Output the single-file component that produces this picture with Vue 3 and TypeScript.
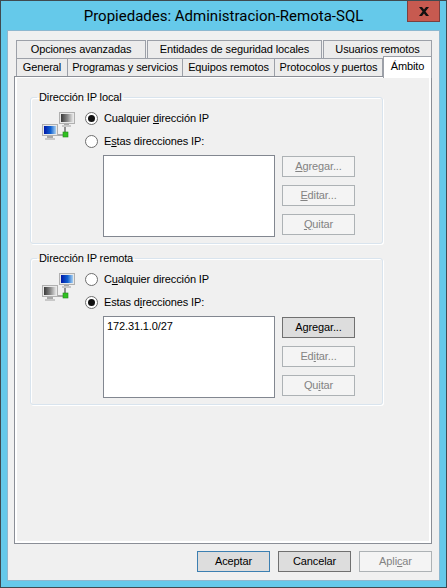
<script setup lang="ts">
interface Btn { pre: string; key: string; post: string; on?: boolean }
interface Group {
  title: string; active: boolean; firstKey: [string, string, string]; secondKey: [string, string, string];
  items: string[]; btns: Btn[]; remote: boolean;
}
const row1 = [
  { t: 'Opciones avanzadas', c: 't-a' },
  { t: 'Entidades de seguridad locales', c: 't-b' },
  { t: 'Usuarios remotos', c: 't-c' },
];
const row2 = [
  { t: 'General', c: 't-d' },
  { t: 'Programas y servicios', c: 't-e' },
  { t: 'Equipos remotos', c: 't-f' },
  { t: 'Protocolos y puertos', c: 't-g' },
];
const groups: Group[] = [
  {
    title: 'Dirección IP local', active: false, remote: false,
    firstKey: ['Cualquier ', 'd', 'irección IP'], secondKey: ['E', 's', 'tas direcciones IP:'],
    items: [],
    btns: [
      { pre: '', key: 'A', post: 'gregar...' },
      { pre: '', key: 'E', post: 'ditar...' },
      { pre: '', key: 'Q', post: 'uitar' },
    ],
  },
  {
    title: 'Dirección IP remota', active: true, remote: true,
    firstKey: ['C', 'u', 'alquier dirección IP'], secondKey: ['Estas d', 'i', 'recciones IP:'],
    items: ['172.31.1.0/27'],
    btns: [
      { pre: 'Agregar...', key: '', post: '', on: true },
      { pre: 'Ed', key: 'i', post: 'tar...' },
      { pre: 'Qu', key: 'i', post: 'tar' },
    ],
  },
];
</script>

<template>
  <div class="window">
    <header class="titlebar">
      <span class="title">Propiedades: Administracion-Remota-SQL</span>
      <div class="close">
        <svg width="14" height="11" viewBox="0 0 14 11"><path d="M2 1h3l2 2.500L9 1h3L8.500 5.500 12 10H9L7 7.500 5 10H2l3.500-4.500z" fill="#111" /></svg>
      </div>
    </header>
    <main class="client">
      <div class="tabrow first">
        <div v-for="tab in row1" :key="tab.t" class="tab" :class="tab.c">{{ tab.t }}</div>
      </div>
      <div class="tabrow second">
        <div v-for="tab in row2" :key="tab.t" class="tab" :class="tab.c">{{ tab.t }}</div>
        <div class="tab active">Ámbito</div>
      </div>
      <section class="page">
        <div class="page-inner">
          <fieldset v-for="g in groups" :key="g.title" class="group">
            <legend>{{ g.title }}</legend>
            <div class="group-body">
              <svg class="net" width="34" height="30" viewBox="0 0 34 30">
                <defs>
                  <linearGradient id="gray" x1="0" x2="1" y1="0" y2="0">
                    <stop offset="0" stop-color="#3a3a3a" /><stop offset="0.55" stop-color="#8c8c8c" /><stop offset="1" stop-color="#e4e4e4" />
                  </linearGradient>
                  <linearGradient id="blue" x1="0" x2="1" y1="0" y2="0">
                    <stop offset="0" stop-color="#0018a8" /><stop offset="0.55" stop-color="#1060d0" /><stop offset="1" stop-color="#a8d0f0" />
                  </linearGradient>
                </defs>
                <rect x="22" y="12" width="5" height="2" fill="#a8a8a8" />
                <rect x="20" y="14" width="9" height="2" fill="#c8c8c8" />
                <rect x="22" y="16" width="2" height="6" fill="#8e8e8e" />
                <rect x="15" y="23" width="6" height="2" fill="#a8a8a8" />
                <rect x="17.500" y="1.500" width="15" height="11" fill="#e8e8e8" stroke="#b0b0b0" />
                <rect x="19" y="3" width="12" height="8" :fill="g.remote ? 'url(#blue)' : 'url(#gray)'" />
                <rect x="21" y="21" width="5" height="5" fill="#30c020" stroke="#208a18" stroke-width="0.600" />
                <rect x="0.500" y="13.500" width="15" height="11" fill="#e8e8e8" stroke="#b0b0b0" />
                <rect x="2" y="15" width="12" height="8" :fill="g.remote ? 'url(#gray)' : 'url(#blue)'" />
                <rect x="5" y="25" width="6" height="2" fill="#a8a8a8" />
                <rect x="3" y="27" width="10" height="2" fill="#c8c8c8" />
              </svg>
              <div class="options">
                <label class="radio">
                  <span class="dot" :class="{ sel: !g.active }"></span>
                  <span>{{ g.firstKey[0] }}<u>{{ g.firstKey[1] }}</u>{{ g.firstKey[2] }}</span>
                </label>
                <label class="radio second-radio">
                  <span class="dot" :class="{ sel: g.active }"></span>
                  <span>{{ g.secondKey[0] }}<u>{{ g.secondKey[1] }}</u>{{ g.secondKey[2] }}</span>
                </label>
                <div class="list-row">
                  <div class="listbox">
                    <div v-for="it in g.items" :key="it" class="item">{{ it }}</div>
                  </div>
                  <div class="btn-col">
                    <button v-for="b in g.btns" :key="b.pre + b.key + b.post" class="btn" :class="{ off: !b.on }">
                      {{ b.pre }}<u>{{ b.key }}</u>{{ b.post }}
                    </button>
                  </div>
                </div>
              </div>
            </div>
          </fieldset>
        </div>
      </section>
      <footer class="footer">
        <button class="btn default">Aceptar</button>
        <button class="btn">Cancelar</button>
        <button class="btn off">Apli<u>c</u>ar</button>
      </footer>
    </main>
  </div>
</template>

<style scoped>
.window {
  width: 447px;
  height: 588px;
  box-sizing: border-box;
  border: 1px solid #3f4a50;
  background: #65c9ea;
  font-family: "Liberation Sans", sans-serif;
  font-size: 11px;
  letter-spacing: -0.12px;
  color: #000;
  position: relative;
  display: flex;
  flex-direction: column;
  overflow: hidden;
}
.titlebar {
  height: 30px;
  flex: none;
  display: flex;
  justify-content: center;
  align-items: center;
}
.title {
  font-family: "Roboto", sans-serif;
  font-size: 15px;
  letter-spacing: 0;
  line-height: 20px;
  margin-top: -1px;
}
.close {
  position: absolute;
  top: 0;
  right: 6px;
  width: 33px;
  height: 21px;
  box-sizing: border-box;
  background: #c75a50;
  border: 1px solid #7a4040;
  border-top: 0;
  display: flex;
  align-items: center;
  justify-content: center;
}
.client {
  width: 431px;
  height: 549px;
  margin-left: 7px;
  background: #f0f0f0;
  box-shadow: 0 0 0 1px #8db8d0;
  display: flex;
  flex-direction: column;
}
.tabrow {
  display: flex;
  height: 18px;
  flex: none;
}
.tabrow.first {
  margin: 9px 0 0 8px;
}
.tabrow.second {
  margin-left: 8px;
}
.tab {
  box-sizing: border-box;
  height: 100%;
  border: 1px solid #9ca0a8;
  border-bottom: 0;
  background: #ececec;
  text-align: center;
  line-height: 17px;
  white-space: nowrap;
  flex: none;
}
.t-a { width: 130px; }
.t-b { width: 175px; margin-left: 1px; }
.t-c { width: 109px; margin-left: 1px; }
.t-d { width: 52px; }
.t-e { width: 116px; margin-left: -1px; }
.t-f { width: 93px; margin-left: -1px; }
.t-g { width: 109px; margin-left: -1px; }
.tab.active {
  width: 49px;
  height: 22px;
  margin: -2px 0 -2px 0;
  background: #fff;
  line-height: 19px;
  position: relative;
  z-index: 1;
}
.page {
  margin-left: 6px;
  width: 418px;
  height: 468px;
  flex: none;
  box-sizing: border-box;
  border: 1px solid #8a8e96;
  background: #fff;
  padding: 1px 2px 2px 2px;
}
.page-inner {
  height: 100%;
  background: #f0f0f0;
  padding: 12px 0 0 13px;
  box-sizing: border-box;
}
.group {
  width: 353px;
  box-sizing: border-box;
  margin: 0 0 7px;
  padding: 0;
  border: 1px solid #d9e4ee;
  border-radius: 3px;
  box-shadow: 1px 1px 0 #fff, inset 1px 1px 0 #fff;
  min-width: 0;
}
legend {
  margin-left: 6px;
  padding: 0 2px;
  line-height: 15px;
}
.group-body {
  display: flex;
  align-items: flex-start;
  padding: 6px 0 6px 11px;
}
.net {
  flex: none;
}
.options {
  margin-left: 9px;
}
.radio {
  display: flex;
  align-items: center;
  height: 15px;
  gap: 6px;
  line-height: 15px;
  white-space: nowrap;
}
.second-radio { margin-top: 8px; }
.dot {
  width: 13px;
  height: 13px;
  box-sizing: border-box;
  border: 1px solid #6e6e6e;
  border-radius: 50%;
  background: #fff;
  position: relative;
  flex: none;
}
.dot.sel::after {
  content: "";
  position: absolute;
  left: 2px;
  top: 2px;
  width: 7px;
  height: 7px;
  border-radius: 50%;
  background: #111;
}
.list-row {
  display: flex;
  margin: 6px 0 0 18px;
}
.listbox {
  width: 172px;
  height: 82px;
  box-sizing: border-box;
  border: 1px solid #828790;
  background: #fff;
  padding: 2px 3px;
  line-height: 15px;
}
.btn-col {
  margin-left: 7px;
  padding-top: 1px;
  display: flex;
  flex-direction: column;
  gap: 8px;
}
.btn {
  width: 73px;
  height: 21px;
  box-sizing: border-box;
  border: 1px solid #707070;
  background: #dddddd;
  font: inherit;
  letter-spacing: inherit;
  color: #000;
  padding: 0;
  line-height: 17px;
}
.btn.off {
  border-color: #adb2b5;
  background: #f4f4f4;
  color: #838383;
}
.btn.default {
  border-color: #3c7fb1;
}
.footer {
  margin-top: 7px;
  margin-left: 189px;
  display: flex;
  gap: 8px;
}
</style>

<style>
html, body { margin: 0; padding: 0; background: #fff; }
</style>
